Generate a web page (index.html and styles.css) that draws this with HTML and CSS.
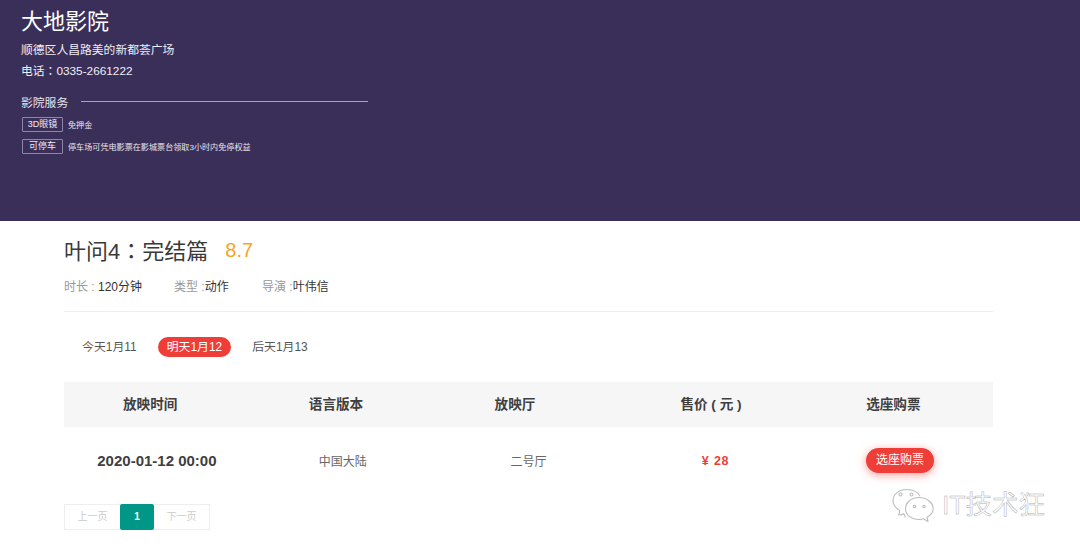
FILE: index.html
```html
<!DOCTYPE html>
<html lang="zh-CN">
<head>
<meta charset="utf-8">
<title>大地影院</title>
<link rel="stylesheet" href="styles.css">
</head>
<body>
<header class="banner">
  <h1 class="cinema-name">大地影院</h1>
  <p class="cinema-line">顺德区人昌路美的新都荟广场</p>
  <p class="cinema-line">电话<span class="mid-punct" lang="zh-TW">：</span>0335-2661222</p>
  <div class="service-head"><span class="service-title">影院服务</span><i class="service-rule"></i></div>
  <div class="service"><span class="tag">3D眼镜</span><span class="service-text">免押金</span></div>
  <div class="service"><span class="tag">可停车</span><span class="service-text">停车场可凭电影票在影城票台领取3小时内免停权益</span></div>
</header>
<main class="content">
  <div class="movie-title"><h2>叶问4<span class="mid-punct" lang="zh-TW">：</span>完结篇</h2><span class="score">8.7</span></div>
  <div class="meta">
    <span class="meta-item meta-a"><em>时长 : </em>120分钟</span>
    <span class="meta-item meta-b"><em>类型 :</em>动作</span>
    <span class="meta-item"><em>导演 :</em>叶伟信</span>
  </div>
  <nav class="dates">
    <a class="date">今天1月11</a>
    <a class="date active">明天1月12</a>
    <a class="date">后天1月13</a>
  </nav>
  <div class="table-head">
    <span>放映时间</span><span>语言版本</span><span>放映厅</span><span>售价 ( 元 )</span><span>选座购票</span>
  </div>
  <div class="table-row">
    <span class="time">2020-01-12 00:00</span>
    <span>中国大陆</span>
    <span>二号厅</span>
    <span class="price">¥ 28</span>
    <span class="buy-cell"><a class="buy">选座购票</a></span>
  </div>
  <div class="pager">
    <a class="page">上一页</a><a class="page current">1</a><a class="page">下一页</a>
  </div>
</main>
<div class="watermark">
  <svg class="wm-icon" width="42" height="34" viewBox="0 0 42 34" fill="none" stroke="#bdbdbd" stroke-width="1.1">
    <path d="M13 29.500c.2-1.600-.5-3-1.500-3.700C9.800 27 7.500 27 6.500 26.800c.9-1.200 1.400-3 1-4.400C3.500 19.800 1 16.300 1 12.500 1 6.200 7 1.500 15 1.500c5.600 0 10.800 2.600 13 6.700"/>
    <path d="M27 9.500c-7.500 0-13.500 5-13.500 11.200S19.500 31.500 27 31.500c1.700 0 3-.2 4.400-.7l4.600 2.700-1-4.300c3.500-2 6.200-5 6.200-8.500C41.200 14.500 34.500 9.500 27 9.500z" fill="#fff"/>
    <circle cx="8.500" cy="6.500" r="1.500"/><circle cx="19.500" cy="6.500" r="1.500"/><circle cx="22.500" cy="18.500" r="1.200"/><circle cx="32" cy="18.500" r="1.200"/>
  </svg>
  <span class="wm-text">IT技术狂</span>
</div>
</body>
</html>
```
FILE: styles.css
```css
* { box-sizing: border-box; }
html, body { margin: 0; padding: 0; }
body {
  width: 1080px;
  height: 552px;
  overflow: hidden;
  background: #fff;
  color: #333;
  font-family: "Liberation Sans", "Noto Sans CJK SC", sans-serif;
  font-size: 12px;
  position: relative;
}
.mid-punct { font-family: "Noto Sans CJK TC", sans-serif; line-height: 1; }
.banner {
  height: 221px;
  background: #392f59;
  color: #fff;
  padding: 7px 0 0 22px;
}
.cinema-name {
  margin: 0 0 3px -1px;
  font-size: 22px;
  font-weight: 400;
  line-height: 30px;
}
.cinema-line {
  margin: 0 0 0 -1px;
  font-size: 11.8px;
  line-height: 21px;
  color: #efedf4;
}
.service-head {
  display: flex;
  align-items: center;
  gap: 13px;
  margin-top: 11px;
  height: 17px;
  color: #e6e3ee;
}
.service-title { margin-left: -1px; font-size: 11.8px; }
.service-rule {
  display: block;
  width: 287px;
  height: 1px;
  background: #a89fc4;
}
.service {
  display: flex;
  align-items: center;
  gap: 5px;
  margin-top: 6px;
  height: 16px;
}
.tag {
  width: 41px;
  height: 15px;
  border: 1px solid #8d86a8;
  border-radius: 1px;
  font-size: 9px;
  line-height: 13px;
  text-align: center;
  color: #eeeaf5;
}
.service-text { font-size: 8.1px; color: #e8e5ef; }
.content {
  width: 929px;
  margin-left: 64px;
}
.movie-title {
  display: flex;
  align-items: center;
  gap: 17px;
  height: 30px;
  margin-top: 14px;
}
.movie-title h2 {
  margin: 0 0 2px;
  font-size: 22px;
  font-weight: 400;
  color: #3a3a3a;
}
.score { font-size: 20px; color: #f5a623; }
.meta {
  display: flex;
  height: 19px;
  margin-top: 13px;
  line-height: 19px;
  color: #333;
}
.meta em { font-style: normal; color: #999; }
.meta-a { width: 110px; }
.meta-b { width: 88px; }
.dates {
  display: flex;
  gap: 12px;
  margin-top: 14px;
  padding: 25px 0 0 9px;
  border-top: 1px solid #eee;
  font-size: 11.9px;
}
.date {
  height: 20px;
  padding: 0 9px;
  border-radius: 10px;
  line-height: 20px;
  color: #555;
}
.date.active { background: #ef3e38; color: #fff; }
.table-head {
  display: grid;
  grid-template-columns: repeat(5, 1fr);
  height: 45px;
  margin-top: 25px;
  background: #f6f6f6;
  font-size: 13.6px;
  font-weight: 700;
  line-height: 45px;
  color: #3f3f3f;
}
.table-head > span { padding-left: 59px; }
.table-row {
  display: grid;
  grid-template-columns: repeat(5, 1fr);
  align-items: center;
  height: 66px;
  text-align: center;
  color: #666;
}
.time { font-size: 15px; font-weight: 700; color: #3f3f3f; }
.price {
  padding: 2px 0 0 2px;
  font-size: 12.500px;
  font-weight: 700;
  letter-spacing: .4px;
  word-spacing: 1px;
  color: #ef3e38;
}
.buy {
  display: inline-block;
  width: 68px;
  height: 25px;
  border-radius: 13px;
  background: #ef3e38;
  box-shadow: 0 2px 8px rgba(239, 62, 56, .5);
  color: #fff;
  line-height: 24px;
}
.pager {
  display: flex;
  margin-top: 11px;
  width: 146px;
  height: 26px;
}
.page {
  width: 56px;
  border: 1px solid #eee;
  font-size: 10px;
  line-height: 24px;
  text-align: center;
  color: #ccc;
}
.page:first-child { border-right: 0; }
.page:last-child { border-left: 0; }
.page.current {
  width: 34px;
  border: 0;
  border-radius: 2px;
  background: #009688;
  line-height: 26px;
  color: #fff;
  font-weight: 700;
}
.watermark {
  position: absolute;
  left: 892px;
  top: 488px;
  display: flex;
  align-items: center;
  gap: 8px;
}
.wm-text {
  font-size: 26.5px;
  line-height: 34px;
  color: #fff;
  -webkit-text-stroke: .5px #b0b0b0;
}
```
